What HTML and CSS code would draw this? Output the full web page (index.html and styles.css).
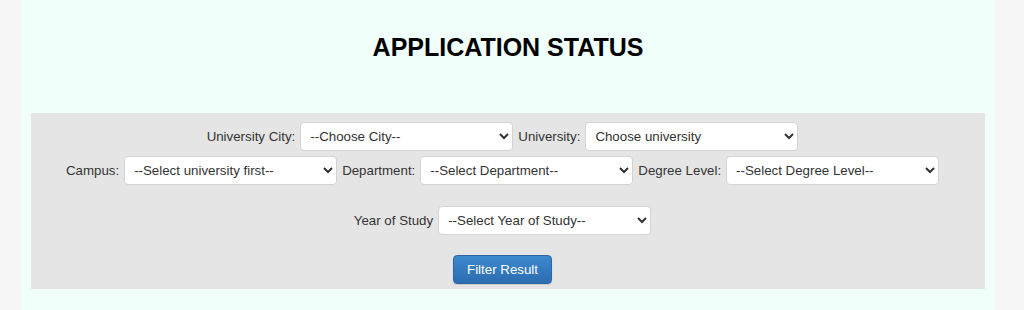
FILE: index.html
```html
<!DOCTYPE html>
<html lang="en">
<head>
<meta charset="utf-8">
<title>Application Status</title>
<link rel="stylesheet" href="styles.css">
</head>
<body>
<div class="page">
  <div class="main">
    <h2 class="title">APPLICATION STATUS</h2>
    <form class="panel">
      <div class="row">
        <label class="lbl">University City:</label>
        <select class="sel"><option>--Choose City--</option></select>
        <label class="lbl">University:</label>
        <select class="sel"><option>Choose university</option></select>
      </div>
      <div class="row">
        <label class="lbl">Campus:</label>
        <select class="sel"><option>--Select university first--</option></select>
        <label class="lbl">Department:</label>
        <select class="sel"><option>--Select Department--</option></select>
        <label class="lbl">Degree Level:</label>
        <select class="sel"><option>--Select Degree Level--</option></select>
      </div>
      <div class="row row-year">
        <label class="lbl">Year of Study</label>
        <select class="sel"><option>--Select Year of Study--</option></select>
      </div>
      <div class="row row-btn">
        <button type="button" class="btn">Filter Result</button>
      </div>
    </form>
  </div>
</div>
</body>
</html>
```

FILE: styles.css
```css
html, body {
  margin: 0;
  padding: 0;
}
body {
  background: #f6f6f6;
  font-family: "Liberation Sans", Arial, sans-serif;
  color: #333;
}
.page {
  width: 1024px;
  height: 310px;
  padding-left: 21px;
  box-sizing: border-box;
}
.main {
  width: 974px;
  height: 310px;
  background: #f0fffa;
  padding: 0 10px;
  box-sizing: border-box;
  overflow: hidden;
}
.title {
  margin: 35px 0 53px 0;
  font-size: 25px;
  line-height: 25px;
  font-weight: bold;
  color: #000;
  text-align: center;
}
.panel {
  background: #e5e5e5;
  height: 176px;
  padding: 9px 11px 0 0;
  box-sizing: border-box;
  display: flex;
  flex-direction: column;
}
.row {
  display: flex;
  justify-content: center;
  align-items: center;
  gap: 5px;
  height: 29px;
}
.row + .row {
  margin-top: 5px;
}
.row-year {
  margin-top: 21px !important;
}
.row-btn {
  margin-top: 20px !important;
}
.lbl {
  font-size: 13.3px;
  color: #333;
  white-space: nowrap;
}
.sel {
  width: 213px;
  height: 29px;
  box-sizing: border-box;
  background-color: #fff;
  border: 1px solid #d4d4d4;
  border-radius: 4px;
  padding: 0 6px 0 5px;
  font-family: "Liberation Sans", Arial, sans-serif;
  font-size: 13.3px;
  color: #333;
}
.btn {
  width: 99px;
  height: 29px;
  box-sizing: border-box;
  padding: 0 12px;
  border: 1px solid #2b67a3;
  border-radius: 4px;
  background: linear-gradient(to bottom, #3d89cf 0%, #2c6cb0 100%);
  color: #fff;
  font-family: "Liberation Sans", Arial, sans-serif;
  font-size: 13.3px;
  box-shadow: 0 1px 1px rgba(0,0,0,0.12);
}
```
